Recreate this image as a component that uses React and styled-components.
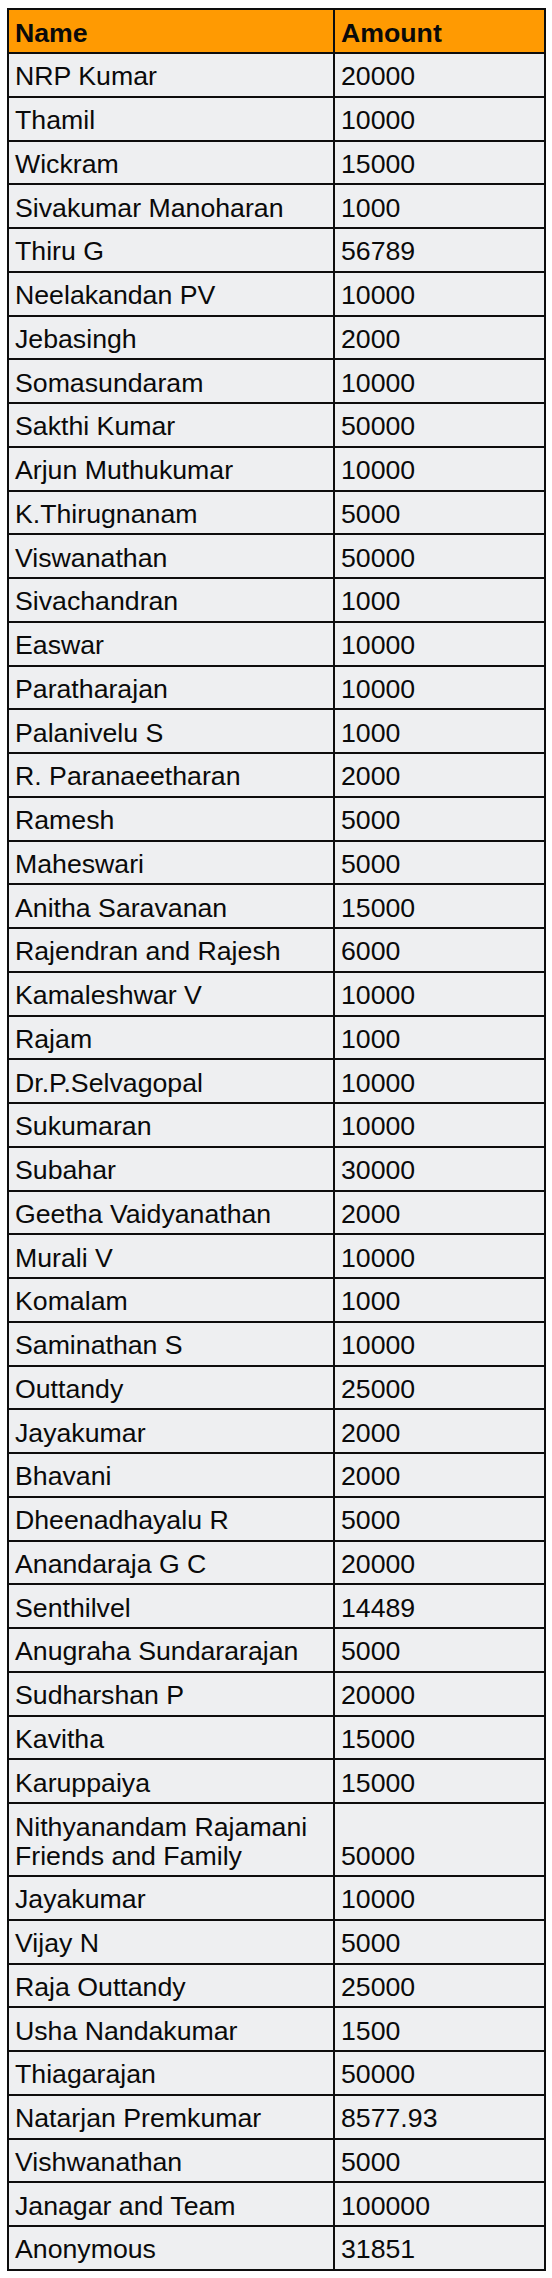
import React from "react";
import styled, { createGlobalStyle } from "styled-components";

const Global = createGlobalStyle`
  html, body { margin: 0; padding: 0; background: #ffffff; }
  body { font-family: "Liberation Sans", Arial, sans-serif; }
`;

const Page = styled.div`
  padding: 8px 0 0 7px;
`;

const Grid = styled.div`
  display: grid;
  grid-template-columns: 324px 209px;
  gap: 2px;
  padding: 2px;
  background: #0d0d0d;
  width: max-content;
`;

const Cell = styled.div`
  display: flex;
  align-items: flex-end;
  box-sizing: border-box;
  height: ${(p) => p.$h}px;
  padding: 0 6px 5px 6px;
  font-size: 26.7px;
  line-height: 28.5px;
  color: #0a0a0a;
  background: ${(p) => (p.$head ? "#ff9a02" : "#eeeff1")};
  font-weight: ${(p) => (p.$head ? 700 : 400)};
  white-space: pre-line;
`;

const rows = [
  ["NRP Kumar", "20000"],
  ["Thamil", "10000"],
  ["Wickram", "15000"],
  ["Sivakumar Manoharan", "1000"],
  ["Thiru G", "56789"],
  ["Neelakandan PV", "10000"],
  ["Jebasingh", "2000"],
  ["Somasundaram", "10000"],
  ["Sakthi Kumar", "50000"],
  ["Arjun Muthukumar", "10000"],
  ["K.Thirugnanam", "5000"],
  ["Viswanathan", "50000"],
  ["Sivachandran", "1000"],
  ["Easwar", "10000"],
  ["Paratharajan", "10000"],
  ["Palanivelu S", "1000"],
  ["R. Paranaeetharan", "2000"],
  ["Ramesh", "5000"],
  ["Maheswari", "5000"],
  ["Anitha Saravanan", "15000"],
  ["Rajendran and Rajesh", "6000"],
  ["Kamaleshwar V", "10000"],
  ["Rajam", "1000"],
  ["Dr.P.Selvagopal", "10000"],
  ["Sukumaran", "10000"],
  ["Subahar", "30000"],
  ["Geetha Vaidyanathan", "2000"],
  ["Murali V", "10000"],
  ["Komalam", "1000"],
  ["Saminathan S", "10000"],
  ["Outtandy", "25000"],
  ["Jayakumar", "2000"],
  ["Bhavani", "2000"],
  ["Dheenadhayalu R", "5000"],
  ["Anandaraja G C", "20000"],
  ["Senthilvel", "14489"],
  ["Anugraha Sundararajan", "5000"],
  ["Sudharshan P", "20000"],
  ["Kavitha", "15000"],
  ["Karuppaiya", "15000"],
  ["Nithyanandam Rajamani\nFriends and Family", "50000", true],
  ["Jayakumar", "10000"],
  ["Vijay N", "5000"],
  ["Raja Outtandy", "25000"],
  ["Usha Nandakumar", "1500"],
  ["Thiagarajan", "50000"],
  ["Natarjan Premkumar", "8577.93"],
  ["Vishwanathan", "5000"],
  ["Janagar and Team", "100000"],
  ["Anonymous", "31851"],
];

export default function App() {
  return (
    <>
      <Global />
      <Page>
        <Grid>
          <Cell $head $h={42}>Name</Cell>
          <Cell $head $h={42}>Amount</Cell>
          {rows.map(([name, amt, tall], i) => (
            <React.Fragment key={i}>
              <Cell $h={tall ? 71 : 41.75}>{name}</Cell>
              <Cell $h={tall ? 71 : 41.75}>{amt}</Cell>
            </React.Fragment>
          ))}
        </Grid>
      </Page>
    </>
  );
}
